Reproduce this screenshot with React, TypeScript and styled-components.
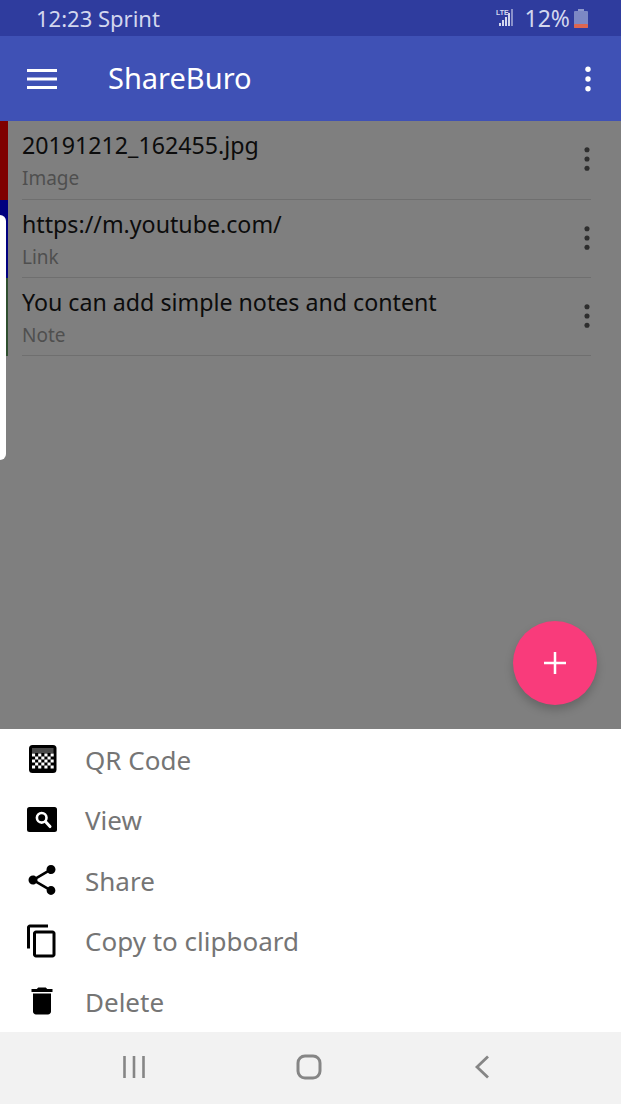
import { FC, ReactNode } from 'react'
import styled, { createGlobalStyle } from 'styled-components'

const GlobalStyle = createGlobalStyle`
  html, body {
    margin: 0;
    padding: 0;
    background: #7f7f7f;
  }
  * {
    box-sizing: border-box;
  }
`

const Page = styled.div`
  position: relative;
  display: flex;
  flex-direction: column;
  width: 621px;
  height: 1104px;
  overflow: hidden;
  font-family: 'Noto Sans', 'Open Sans', sans-serif;
`

const StatusBar = styled.div`
  display: flex;
  align-items: center;
  justify-content: space-between;
  height: 36px;
  padding: 0 33px 0 36px;
  background: #2f3c9e;
  color: #d3d7ee;
  font-size: 22px;
`

const StatusRight = styled.div`
  display: flex;
  align-items: center;
`

const Percent = styled.span`
  margin: 0 4px 0 11px;
  font-size: 23px;
`

const AppBar = styled.header`
  display: flex;
  align-items: center;
  height: 85px;
  padding: 0 15px 0 27px;
  background: #3f51b5;
  color: #fff;
`

const Title = styled.h1`
  flex: 1;
  margin: 0 0 2px 51px;
  font-size: 29px;
  font-weight: 400;
`

const Content = styled.main`
  position: relative;
  flex: 1;
  background: #7f7f7f;
`

const Row = styled.div<{ $stripe: string }>`
  display: flex;
  height: 78px;
  padding-right: 30px;
  border-left: 8px solid ${(p) => p.$stripe};

  &:first-child {
    height: 79px;
  }
`

const RowBody = styled.div`
  flex: 1;
  display: flex;
  align-items: center;
  margin-left: 14px;
  border-bottom: 1px solid #6f6f6f;
`

const RowText = styled.div`
  flex: 1;
`

const RowTitle = styled.div`
  color: #0c0c0c;
  font-size: 23.2px;
  line-height: 34px;
`

const RowType = styled.div`
  margin-top: 2px;
  color: #4f4f4f;
  font-size: 19px;
  line-height: 28px;
`

const RowMenu = styled.div`
  display: flex;
  margin: 0 -13px 2px 0;
  color: #2e2e2e;
`

const EdgePanel = styled.div`
  position: absolute;
  left: 0;
  top: 94px;
  width: 6px;
  height: 245px;
  background: #fff;
  border-radius: 0 6px 6px 0;
`

const Fab = styled.button`
  position: absolute;
  right: 24px;
  bottom: 24px;
  display: flex;
  align-items: center;
  justify-content: center;
  width: 84px;
  height: 84px;
  padding: 0;
  border: none;
  border-radius: 50%;
  background: #f93b7b;
  color: #fff;
  box-shadow: 0 5px 10px rgba(0, 0, 0, 0.2);
`

const Sheet = styled.section`
  display: flex;
  flex-direction: column;
  height: 303px;
  background: #fff;
`

const SheetItem = styled.div`
  display: flex;
  align-items: center;
  gap: 25px;
  height: 60.5px;
  padding-left: 24px;
  color: #757575;
  font-size: 26px;
`

const SheetLabel = styled.span`
  padding-top: 1px;
`

const IconBox = styled.span`
  display: flex;
  width: 36px;
  height: 36px;
  color: #000;
`

const NavBar = styled.nav`
  display: flex;
  align-items: center;
  justify-content: space-between;
  height: 72px;
  padding: 0 131px 2px 122px;
  background: #f2f2f2;
  color: #868686;
`

const HomeIcon = styled.svg`
  margin-right: 3px;
`

const Icon: FC<{ size: number; children: ReactNode }> = ({ size, children }) => (
  <svg width={size} height={size} viewBox="0 0 24 24" fill="currentColor">
    {children}
  </svg>
)

const Kebab: FC<{ size: number }> = ({ size }) => (
  <Icon size={size}>
    <circle cx="12" cy="5.5" r="1.8" />
    <circle cx="12" cy="12" r="1.8" />
    <circle cx="12" cy="18.5" r="1.8" />
  </Icon>
)

const SignalIcon = () => (
  <svg width="18" height="20" viewBox="0 0 18 20" fill="currentColor">
    <text x="0" y="6.5" fontSize="7" fontWeight="700" fontFamily="Liberation Sans, sans-serif">
      LTE
    </text>
    <rect x="3" y="15" width="2" height="3" />
    <rect x="6" y="12" width="2" height="6" />
    <rect x="9" y="9" width="2" height="9" />
    <rect x="12" y="5" width="2" height="13" />
    <rect x="15" y="1" width="2" height="17" opacity="0.55" />
  </svg>
)

const BatteryIcon = () => (
  <svg width="14" height="19" viewBox="0 0 14 19">
    <rect x="4" y="0" width="6" height="2" fill="#8d98cb" />
    <rect x="0" y="2" width="14" height="17" rx="1" fill="#7c88c4" />
    <rect x="0" y="15" width="14" height="4" rx="1" fill="#dd6650" />
  </svg>
)

const QrIcon = () => (
  <svg width="36" height="36" viewBox="0 0 36 36">
    <rect x="5" y="4" width="27.5" height="28" rx="3.5" fill="#000" />
    <rect x="8" y="7" width="21.5" height="5" fill="#4a4a4a" />
    <g fill="#fff">
      {[0, 1, 2, 3, 4, 5, 6].map((i) =>
        [0, 1, 2, 3, 4].map((j) =>
          (i + j) % 2 === 0 ? (
            <rect key={`${i}-${j}`} x={8 + i * 3.1} y={12.5 + j * 3} width="3.1" height="3" />
          ) : null,
        ),
      )}
    </g>
  </svg>
)

const ViewIcon = () => (
  <svg width="36" height="36" viewBox="0 0 36 36">
    <rect x="3" y="5" width="30" height="25" rx="2.5" fill="#000" />
    <circle cx="17.7" cy="15.8" r="4.8" fill="none" stroke="#fff" strokeWidth="2.6" />
    <path d="M21.4 19.6 L26 24.6" stroke="#fff" strokeWidth="3" strokeLinecap="round" />
  </svg>
)

const actions: { label: string; icon: ReactNode }[] = [
  { label: 'QR Code', icon: <QrIcon /> },
  { label: 'View', icon: <ViewIcon /> },
  {
    label: 'Share',
    icon: (
      <Icon size={36}>
        <path d="M18 16.08c-.76 0-1.44.3-1.96.77L8.91 12.7c.05-.23.09-.46.09-.7s-.04-.47-.09-.7l7.05-4.11c.54.5 1.25.81 2.04.81 1.66 0 3-1.34 3-3s-1.34-3-3-3-3 1.34-3 3c0 .24.04.47.09.7L8.04 9.81C7.5 9.31 6.79 9 6 9c-1.66 0-3 1.34-3 3s1.34 3 3 3c.79 0 1.5-.31 2.04-.81l7.12 4.16c-.05.21-.08.43-.08.65 0 1.61 1.31 2.92 2.92 2.92 1.61 0 2.92-1.31 2.92-2.92s-1.31-2.92-2.92-2.92z" />
      </Icon>
    ),
  },
  {
    label: 'Copy to clipboard',
    icon: (
      <Icon size={36}>
        <path d="M16 1H4c-1.1 0-2 .9-2 2v14h2V3h12V1zm3 4H8c-1.1 0-2 .9-2 2v14c0 1.1.9 2 2 2h11c1.1 0 2-.9 2-2V7c0-1.1-.9-2-2-2zm0 16H8V7h11v14z" />
      </Icon>
    ),
  },
  {
    label: 'Delete',
    icon: (
      <Icon size={36}>
        <path d="M6 19c0 1.1.9 2 2 2h8c1.1 0 2-.9 2-2V7H6v12zM19 4h-3.5l-1-1h-5l-1 1H5v2h14V4z" />
      </Icon>
    ),
  },
]

const items = [
  { title: '20191212_162455.jpg', type: 'Image', stripe: '#7f0000' },
  { title: 'https://m.youtube.com/', type: 'Link', stripe: '#00007f' },
  { title: 'You can add simple notes and content', type: 'Note', stripe: '#2f4f2f' },
]

export default function App() {
  return (
    <Page>
      <GlobalStyle />
      <StatusBar>
        <span>12:23 Sprint</span>
        <StatusRight>
          <SignalIcon />
          <Percent>12%</Percent>
          <BatteryIcon />
        </StatusRight>
      </StatusBar>
      <AppBar>
        <svg width="30" height="20" viewBox="0 0 30 20" fill="currentColor">
          <rect y="0" width="30" height="3" />
          <rect y="8.5" width="30" height="3" />
          <rect y="17" width="30" height="3" />
        </svg>
        <Title>ShareBuro</Title>
        <Kebab size={36} />
      </AppBar>
      <Content>
        {items.map((item) => (
          <Row key={item.title} $stripe={item.stripe}>
            <RowBody>
              <RowText>
                <RowTitle>{item.title}</RowTitle>
                <RowType>{item.type}</RowType>
              </RowText>
              <RowMenu>
                <Kebab size={34} />
              </RowMenu>
            </RowBody>
          </Row>
        ))}
        <EdgePanel />
        <Fab aria-label="Add">
          <svg width="24" height="24" viewBox="0 0 24 24" fill="currentColor">
            <rect x="1" y="10.75" width="22" height="2.5" />
            <rect x="10.75" y="1" width="2.5" height="22" />
          </svg>
        </Fab>
      </Content>
      <Sheet>
        {actions.map((action) => (
          <SheetItem key={action.label}>
            <IconBox>{action.icon}</IconBox>
            <SheetLabel>{action.label}</SheetLabel>
          </SheetItem>
        ))}
      </Sheet>
      <NavBar>
        <svg width="24" height="24" viewBox="0 0 24 24" fill="none" stroke="currentColor" strokeWidth="2.6">
          <path d="M2.5 1v22M12 1v22M21.5 1v22" />
        </svg>
        <HomeIcon width="26" height="26" viewBox="0 0 26 26" fill="none" stroke="currentColor" strokeWidth="3">
          <rect x="2" y="2" width="22" height="22" rx="7" />
        </HomeIcon>
        <svg width="16" height="24" viewBox="0 0 16 24" fill="none" stroke="currentColor" strokeWidth="2.8">
          <path d="M14 1.5 L3 12 L14 22.5" />
        </svg>
      </NavBar>
    </Page>
  )
}
